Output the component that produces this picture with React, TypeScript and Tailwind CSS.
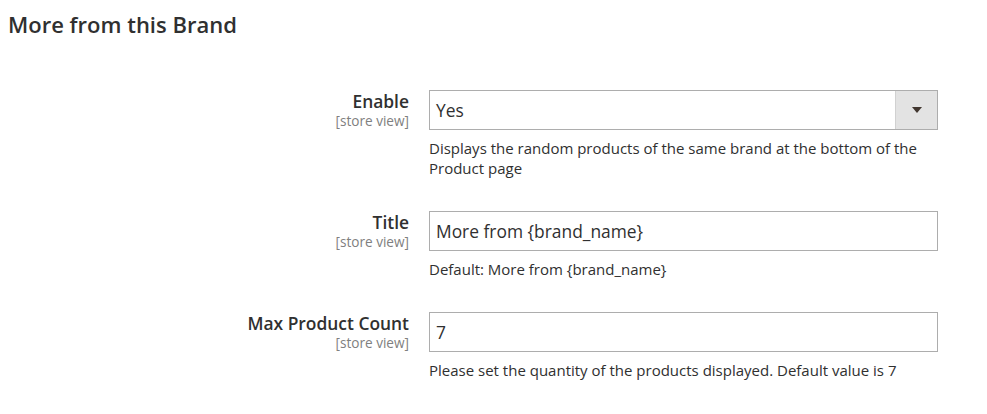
import { ReactNode } from "react";

const font = { fontFamily: '"Open Sans", "Noto Sans", sans-serif' };

function Row({
  label,
  children,
  note,
}: {
  label: string;
  children: ReactNode;
  note: ReactNode;
}) {
  return (
    <div className="flex">
      <div className="w-[421px] shrink-0 pr-5 text-right">
        <div className="text-[17.4px] font-semibold leading-[22px] text-[#303030]">
          {label}
        </div>
        <div className="text-[13.6px] leading-[18px] text-[#808080]">
          [store view]
        </div>
      </div>
      <div className="w-[509px] shrink-0">
        {children}
        <div className="mt-[8px] text-[15px] leading-[20px] text-[#303030]">
          {note}
        </div>
      </div>
    </div>
  );
}

function TextInput({ value }: { value: string }) {
  return (
    <div className="flex h-[40px] items-center border border-[#adadad] bg-white px-[6px] text-[17.4px] text-[#303030]">
      {value}
    </div>
  );
}

export default function App() {
  return (
    <div className="h-[414px] w-[987px] bg-white pl-2" style={font}>
      <h2 className="pt-[9px] text-[22px] font-semibold leading-[30px] text-[#303030]">
        More from this Brand
      </h2>
      <div className="mt-[51px] flex flex-col gap-[33px]">
        <Row
          label="Enable"
          note="Displays the random products of the same brand at the bottom of the Product page"
        >
          <div className="flex h-[40px] border border-[#adadad] bg-white">
            <div className="flex flex-1 items-center px-[6px] text-[17.4px] text-[#303030]">
              Yes
            </div>
            <div className="flex w-[42px] items-center justify-center border-l border-[#d1d1d1] bg-[#e3e3e3]">
              <svg width="10" height="6" viewBox="0 0 10 6">
                <path d="M0 0h10L5 6z" fill="#41362f" />
              </svg>
            </div>
          </div>
        </Row>
        <Row label="Title" note="Default: More from {brand_name}">
          <TextInput value="More from {brand_name}" />
        </Row>
        <Row
          label="Max Product Count"
          note="Please set the quantity of the products displayed. Default value is 7"
        >
          <TextInput value="7" />
        </Row>
      </div>
    </div>
  );
}
